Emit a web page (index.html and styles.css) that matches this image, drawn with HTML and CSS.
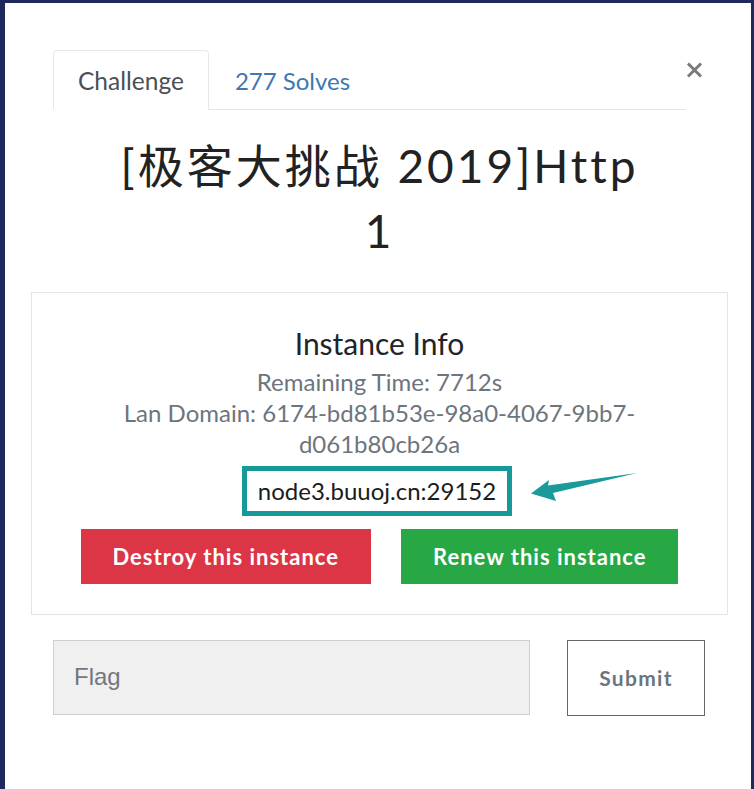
FILE: index.html
```html
<!DOCTYPE html>
<html lang="zh-CN">
<head>
<meta charset="utf-8">
<title>[极客大挑战 2019]Http</title>
<link rel="stylesheet" href="styles.css">
</head>
<body>
<div class="modal">
  <div class="header">
    <ul class="tabs">
      <li class="tab active">Challenge</li>
      <li class="tab link">277 Solves</li>
    </ul>
    <button class="close" aria-label="Close">
      <svg width="17" height="16" viewBox="0 0 17 16"><path d="M2 1.5 L15 14.5 M15 1.5 L2 14.5" stroke="#7a7a7a" stroke-width="3" fill="none"/></svg>
    </button>
  </div>
  <h1 class="title">[极客大挑战 2019]Http<br>1</h1>
  <div class="instance">
    <h3 class="instance-head">Instance Info</h3>
    <div class="meta">
      <div>Remaining Time: 7712s</div>
      <div>Lan Domain: 6174-bd81b53e-98a0-4067-9bb7-d061b80cb26a</div>
    </div>
    <div class="host-row">
      <span class="host">node3.buuoj.cn:29152
        <svg class="arrow" width="115" height="38" viewBox="530 462 115 38"><path d="M535 488.5 L553 475 L552 480.5 L641 468 L557 488 L560 496 Z" fill="#1a9a9a"/></svg>
      </span>
    </div>
    <div class="actions">
      <button class="btn destroy">Destroy this instance</button>
      <button class="btn renew">Renew this instance</button>
    </div>
  </div>
  <form class="flag-row">
    <input class="flag-input" type="text" placeholder="Flag">
    <button class="submit" type="button">Submit</button>
  </form>
</div>
</body>
</html>
```
FILE: styles.css
```css
html, body {
  margin: 0;
  padding: 0;
}
body {
  background: #1f2a5c;
  font-family: Lato, "Noto Sans CJK SC", sans-serif;
  overflow: hidden;
}
.modal {
  margin: 3px 3px 0 5px;
  height: 786px;
  background: #fff;
  box-sizing: border-box;
  padding: 0 23px 0 26px;
}
.header {
  display: flex;
  align-items: flex-start;
  padding: 47px 25px 0 22px;
}
.tabs {
  flex: 1;
  display: flex;
  list-style: none;
  margin: 0;
  padding: 0;
  border-bottom: 1px solid #e3e6e9;
}
.tab {
  height: 59px;
  box-sizing: border-box;
  padding: 0 25px;
  font-size: 24px;
  line-height: 60px;
  border: 1px solid transparent;
  border-radius: 4px 4px 0 0;
  margin-bottom: -1px;
}
.tab.active {
  color: #495057;
  border-color: #e6e8ea #e6e8ea #fff;
  background: #fff;
  height: 60px;
  padding: 0 24px;
  font-size: 24.5px;
}
.tab.link {
  color: #3d78b0;
}
.close {
  width: 17px;
  height: 16px;
  margin-top: 12px;
  padding: 0;
  border: none;
  background: none;
  display: block;
}
.close svg {
  display: block;
}
.title {
  margin: 23px auto 0;
  text-align: center;
  font-size: 46px;
  line-height: 65px;
  font-weight: 400;
  letter-spacing: 3px;
  color: #222;
}
.instance {
  margin-top: 29px;
  border: 1px solid #e4e4e4;
  padding: 32px 0 30px;
  text-align: center;
}
.instance-head {
  margin: 0;
  font-size: 30px;
  line-height: 36px;
  font-weight: 400;
  color: #212529;
}
.meta {
  width: 600px;
  margin: 5px auto 0;
  font-size: 24px;
  line-height: 31px;
  color: #6c757d;
}
.host-row {
  margin-top: 6.5px;
  display: flex;
  justify-content: center;
}
.host {
  position: relative;
  display: block;
  height: 50px;
  box-sizing: border-box;
  border: 5px solid #17999a;
  padding: 0 11px;
  font-size: 24px;
  line-height: 40px;
  color: #1c1c1c;
  margin-right: 5px;
  white-space: nowrap;
}
.arrow {
  position: absolute;
  left: calc(100% + 19px);
  top: -4px;
  display: block;
}
.actions {
  margin-top: 13px;
  display: flex;
  justify-content: center;
  gap: 30px;
}
.btn {
  height: 55px;
  padding: 0 32px;
  border: none;
  border-radius: 0;
  font-family: Lato, sans-serif;
  font-weight: 700;
  font-size: 22px;
  letter-spacing: 1px;
  color: #fff;
}
.destroy {
  background: #dc3545;
}
.renew {
  background: #28a745;
}
.flag-row {
  margin: 25px 0 0;
  padding: 0 23px 0 22px;
  display: flex;
  gap: 37px;
}
.flag-input {
  width: 477px;
  height: 75px;
  box-sizing: border-box;
  background: #f0f0f0;
  border: 1px solid #cfcfcf;
  padding: 0 20px;
  font-family: "Liberation Sans", Arial, sans-serif;
  font-size: 24px;
  color: #495057;
  outline: none;
}
.flag-input::placeholder {
  color: #72787e;
}
.submit {
  width: 138px;
  height: 76px;
  box-sizing: border-box;
  background: #fff;
  border: 1px solid #666;
  border-radius: 0;
  font-family: Lato, sans-serif;
  font-weight: 700;
  font-size: 21px;
  letter-spacing: 1.3px;
  color: #6c757d;
}
```
